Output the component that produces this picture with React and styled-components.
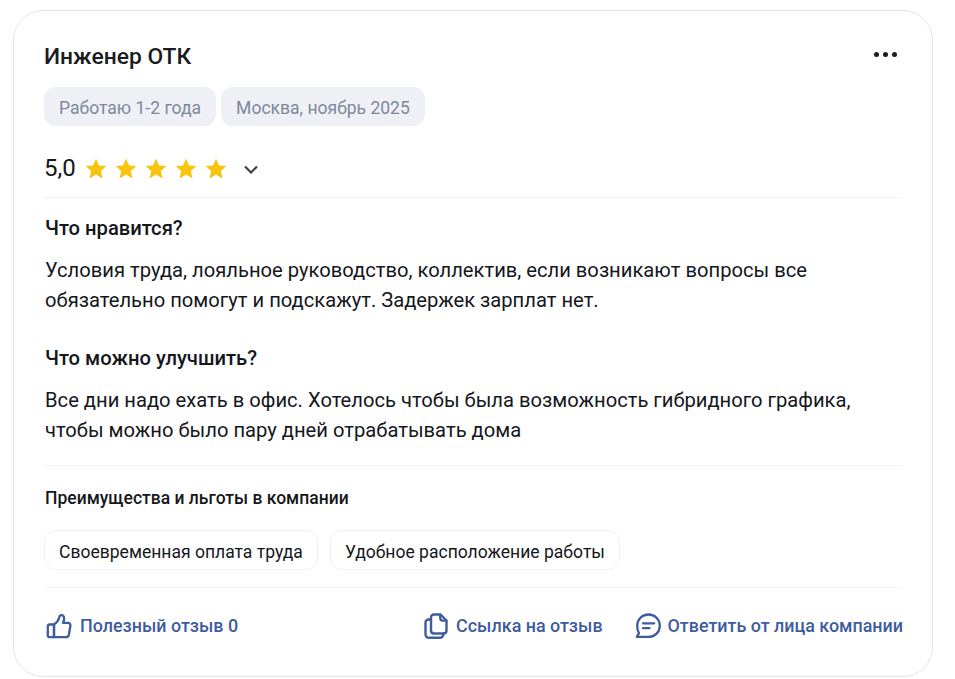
import React from 'react'
import styled, { createGlobalStyle } from 'styled-components'

const Global = createGlobalStyle`
    html, body {
        margin: 0;
        padding: 0;
        background: #fff;
        font-family: Roboto, "Liberation Sans", sans-serif;
    }
`

const Page = styled.div`
    padding: 10px 22px 2px 13px;
    width: 955px;
    height: 679px;
    box-sizing: border-box;
`

const Card = styled.div`
    box-sizing: border-box;
    width: 920px;
    height: 667px;
    border: 1px solid #e0e5ef;
    border-radius: 30px;
    padding: 28px 29px 0 30px;
    color: #15171c;
`

const Header = styled.div`
    display: flex;
    justify-content: space-between;
    align-items: flex-start;
    height: 36px;
`

const Title = styled.h2`
    margin: 0;
    font-size: 22.8px;
    line-height: 36px;
    font-weight: 500;
    color: #1a1c22;
`

const MoreButton = styled.div`
    display: flex;
    gap: 4px;
    margin: 13px 6px 0 0;
`

const Dot = styled.span`
    width: 5px;
    height: 5px;
    border-radius: 50%;
    background: #1a1c22;
`

const Tags = styled.div`
    display: flex;
    gap: 5px;
    margin-top: 12px;
`

const Tag = styled.span`
    height: 39px;
    line-height: 42px;
    padding: 0 15px;
    border-radius: 12px;
    background: #eff0f5;
    color: #7c889c;
    font-size: 17.55px;
    white-space: nowrap;
`

const RatingRow = styled.div`
    display: flex;
    align-items: center;
    height: 36px;
    margin-top: 25px;
`

const RatingValue = styled.span`
    font-size: 24px;
    line-height: 36px;
    margin: -2px 9.500px 0 0;
`

const Stars = styled.div`
    display: flex;
    gap: 8px;
`

const Chevron = styled.svg`
    margin-left: 16px;
`

const Divider = styled.div`
    height: 1px;
    background: #f1f2f6;
    margin-top: ${p => p.$top}px;
`

const Section = styled.div`
    margin-top: ${p => p.$top}px;
    padding-left: 1px;
`

const Heading = styled.h3`
    margin: 0;
    font-size: 20.2px;
    line-height: 28px;
    font-weight: 500;
`

const Text = styled.p`
    margin: 13px 0 0;
    font-size: 20.18px;
    line-height: 30px;
    color: #15171c;
`

const BenefitsTitle = styled.h4`
    margin: 18px 0 0;
    padding-left: 1px;
    font-size: 17.5px;
    line-height: 28px;
    font-weight: 500;
`

const Benefits = styled.div`
    display: flex;
    gap: 12px;
    margin-top: 18px;
`

const Benefit = styled.span`
    box-sizing: border-box;
    height: 40px;
    line-height: 43px;
    padding: 0 14px;
    border: 1px solid #f0f1f7;
    border-radius: 12px;
    font-size: 17.55px;
    white-space: nowrap;
`

const Footer = styled.div`
    display: flex;
    align-items: center;
    justify-content: space-between;
    margin-top: 24px;
    padding-left: 1px;
`

const Actions = styled.div`
    display: flex;
    gap: 32px;
`

const Action = styled.a`
    display: flex;
    align-items: center;
    gap: ${p => p.$gap}px;
    color: #3e5c9f;
    font-size: 17.9px;
    line-height: 28px;
    font-weight: 500;
    white-space: nowrap;
`

const Star = () => (
    <svg width="22" height="22" viewBox="0 0 22 22">
        <path fill="#f7c50c" d="M11 .5l3 6.900 7.400.7-5.600 5 1.700 7.400L11 16.600l-6.500 3.900 1.700-7.400-5.600-5 7.400-.7z" />
    </svg>
)

const ThumbIcon = () => (
    <svg width="28" height="28" viewBox="0 0 28 28" fill="none" stroke="#3e5c9f" strokeWidth="2.300" strokeLinejoin="round" strokeLinecap="round">
        <path d="M9 12.500c2.500-1.600 4.600-4.200 5.200-7 .3-1.300.9-2.400 2.200-2.400 1.700 0 2.700 1.500 2.700 3.400 0 1.500-.5 3-1.200 4.300h5.100c1.600 0 2.700 1.300 2.400 2.900l-1.500 9c-.3 1.500-1.400 2.500-3 2.500H9z" />
        <path d="M9 12.500H4.800c-1.200 0-2 .8-2 2v8.700c0 1.200.8 2 2 2H9z" />
    </svg>
)

const CopyIcon = () => (
    <svg width="24" height="26" viewBox="0 0 24 26" fill="none" stroke="#3e5c9f" strokeWidth="2.400" strokeLinejoin="round" strokeLinecap="round">
        <path d="M10 1.500h6.500l6 6v10c0 1.800-1.200 3-3 3H10c-1.800 0-3-1.200-3-3v-13c0-1.800 1.200-3 3-3z" />
        <path d="M16.300 1.700v3.600c0 1.400.9 2.300 2.300 2.300h3.700" />
        <path d="M7 6.500H4.700c-1.900 0-3.200 1.200-3.200 3.100V21c0 2.300 1.500 3.800 3.800 3.800H15.500c2.200 0 3.700-1.500 3.900-4" />
    </svg>
)

const ChatIcon = () => (
    <svg width="26" height="26" viewBox="0 0 26 26" fill="none" stroke="#3e5c9f" strokeWidth="2.300" strokeLinejoin="round" strokeLinecap="round">
        <path d="M13.500 1.500C20 1.500 24.800 6.500 24.800 12.700S20 23.900 13.500 23.900H1.800l2.200-3.700C2.800 18.300 2.200 15.700 2.200 12.700 2.200 6.500 7 1.500 13.500 1.500z" />
        <path d="M8 10.300h11.200M8 15.200h6.500" />
    </svg>
)

export default function App() {
    return (
        <Page>
            <Global />
            <Card>
                <Header>
                    <Title>Инженер ОТК</Title>
                    <MoreButton>
                        <Dot /><Dot /><Dot />
                    </MoreButton>
                </Header>
                <Tags>
                    <Tag>Работаю 1-2 года</Tag>
                    <Tag>Москва, ноябрь 2025</Tag>
                </Tags>
                <RatingRow>
                    <RatingValue>5,0</RatingValue>
                    <Stars>
                        <Star /><Star /><Star /><Star /><Star />
                    </Stars>
                    <Chevron width="16" height="16" viewBox="0 0 16 16" fill="none" stroke="#3f4247" strokeWidth="2.200">
                        <path d="M2 5.500L8 11.500l6-6" />
                    </Chevron>
                </RatingRow>
                <Divider $top={10} />
                <Section $top={16}>
                    <Heading>Что нравится?</Heading>
                    <Text>
                        Условия труда, лояльное руководство, коллектив, если возникают вопросы все<br />
                        обязательно помогут и подскажут. Задержек зарплат нет.
                    </Text>
                </Section>
                <Section $top={29}>
                    <Heading>Что можно улучшить?</Heading>
                    <Text>
                        Все дни надо ехать в офис. Хотелось чтобы была возможность гибридного графика,<br />
                        чтобы можно было пару дней отрабатывать дома
                    </Text>
                </Section>
                <Divider $top={20} />
                <BenefitsTitle>Преимущества и льготы в компании</BenefitsTitle>
                <Benefits>
                    <Benefit>Своевременная оплата труда</Benefit>
                    <Benefit>Удобное расположение работы</Benefit>
                </Benefits>
                <Divider $top={17} />
                <Footer>
                    <Action $gap={7}><ThumbIcon />Полезный отзыв 0</Action>
                    <Actions>
                        <Action $gap={8}><CopyIcon />Ссылка на отзыв</Action>
                        <Action $gap={7}><ChatIcon />Ответить от лица компании</Action>
                    </Actions>
                </Footer>
            </Card>
        </Page>
    )
}
